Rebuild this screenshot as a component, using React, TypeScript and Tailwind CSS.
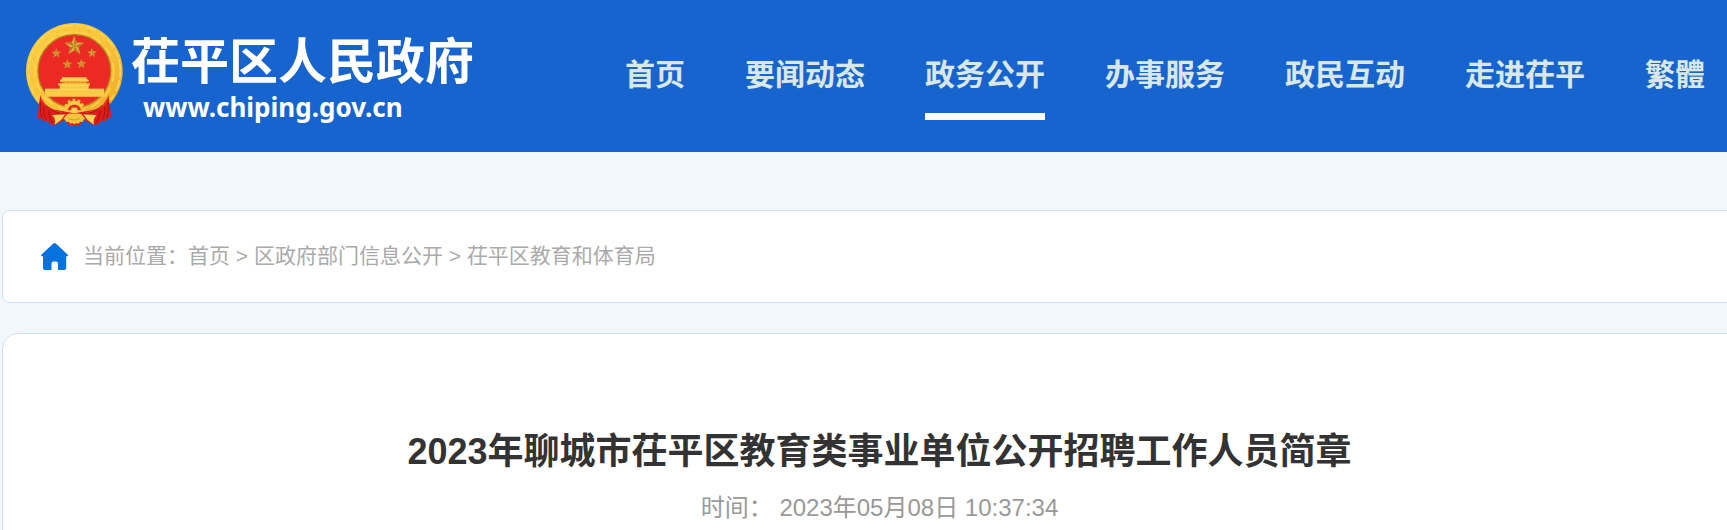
import React from 'react';

interface NavItem {
  label: string;
  active?: boolean;
}

const navItems: NavItem[] = [
  { label: '首页' },
  { label: '要闻动态' },
  { label: '政务公开', active: true },
  { label: '办事服务' },
  { label: '政民互动' },
  { label: '走进茌平' },
  { label: '繁體' },
];

const crumbs = ['首页', '区政府部门信息公开', '茌平区教育和体育局'];

// five pointed star, centred on cx / cy
const Star: React.FC<{ cx: number; cy: number; r: number }> = ({ cx, cy, r }) => {
  const tip = (i: number, radius: number) => {
    const a = (Math.PI / 5) * i - Math.PI / 2;
    return `${(cx + radius * Math.cos(a)).toFixed(1)},${(cy + radius * Math.sin(a)).toFixed(1)}`;
  };
  const points = Array.from({ length: 10 }, (_, i) => tip(i, i % 2 ? r * 0.42 : r));
  return (
    <g>
      <polygon points={points.join(' ')} fill="#e3ae42" />
      {[0, 2, 4, 6, 8].map((i) => (
        <polygon key={i} points={`${cx},${cy} ${tip(i, r)} ${tip(i + 1, r * 0.42)}`} fill="#b9781f" />
      ))}
    </g>
  );
};

const Emblem: React.FC = () => (
  <svg viewBox="18 22 291 309" className="w-[97px] h-[103px] shrink-0" aria-hidden="true">
    <defs>
      <linearGradient id="ring" x1="0" y1="0" x2="1" y2="1">
        <stop offset="0" stopColor="#fbd044" />
        <stop offset="0.5" stopColor="#f7c43a" />
        <stop offset="1" stopColor="#efa827" />
      </linearGradient>
    </defs>
    <circle cx="163" cy="167" r="145" fill="url(#ring)" />
    <circle cx="163" cy="167" r="138" fill="none" stroke="#fdd550" strokeWidth="5" strokeDasharray="19 7 35 12" />
    <circle cx="163" cy="167" r="127" fill="none" stroke="#efb431" strokeWidth="3" strokeDasharray="5 21 8 34" />
    <circle cx="163" cy="167" r="118" fill="none" stroke="#fdd550" strokeWidth="4" strokeDasharray="32 19" />
    <circle cx="163" cy="166" r="109" fill="#ec2a24" stroke="#b5791f" strokeWidth="4" />
    <Star cx={163} cy={91} r={31} />
    <Star cx={109} cy={113} r={15} />
    <Star cx={216} cy={112} r={15} />
    <Star cx={142} cy={146} r={15} />
    <Star cx={184} cy={145} r={15} />
    {/* gate tower */}
    <path d="M126 185h74v5l6 3v5h-86v-5l6-3z" fill="#fbd150" />
    <path d="M128 198h70v7h-70z" fill="#f0a52c" />
    <path d="M115 203h95v6h-4v10h46v24H75v-24h44v-10h-4z" fill="#fbcb45" />
    <path d="M130 201h66" stroke="#c9782a" strokeWidth="2" strokeDasharray="6 5" />
    <path d="M119 210h87M77 221h173" stroke="#ffe07a" strokeWidth="2" />
    {/* upper half of the cog wheel */}
    <circle cx="163" cy="280" r="25" fill="#f9c942" stroke="#f9c942" strokeWidth="12" strokeDasharray="8 6" />
    <path d="M143 284c3-22 37-22 40 0z" fill="#e02a20" />
    <path d="M154 276h18v14h-18z" fill="#fbd150" />
    {/* drapes */}
    <path
      d="M61 238C66 262 84 278 112 284C130 288 146 288 163 294C180 288 196 288 214 284C242 278 260 262 265 238L270 270L274 305L262 308L254 318L244 314L236 326L222 328L210 322L190 312L180 328L146 328L136 312L116 322L104 328L90 326L82 314L72 318L64 308L53 308L56 270Z"
      fill="#de1c1b"
    />
    <path d="M64 250C76 276 98 288 128 291M262 250C250 276 228 288 198 291" fill="none" stroke="#f23a2e" strokeWidth="4" />
    <path
      d="M62 260C60 278 61 292 66 306M72 274C70 290 73 302 80 314M86 284C86 298 90 310 98 322M264 260C266 278 265 292 260 306M254 274C256 290 253 302 246 314M240 284C240 298 236 310 228 322M80 270C94 284 110 292 134 296M246 270C232 284 216 292 192 296"
      fill="none"
      stroke="#ab1013"
      strokeWidth="3"
    />
    <path
      d="M96 298L136 296L124 312L104 327C107 314 104 305 96 298ZM230 298L190 296L202 312L222 327C219 314 222 305 230 298Z"
      fill="#f9d457"
    />
    {/* lower half of the cog wheel */}
    <path
      d="M135 304C140 293 152 291 163 296C174 291 186 293 191 304L196 309L190 313L188 319L180 318L176 324L169 322L163 326L157 322L150 324L146 318L138 319L136 313L130 309Z"
      fill="#f7c63f"
    />
    <path d="M144 306c10 9 28 9 38 0" fill="none" stroke="#dc9829" strokeWidth="3" />
  </svg>
);

const HomeIcon: React.FC = () => (
  <svg viewBox="0 0 27 27" className="size-[27px] shrink-0" aria-hidden="true">
    <path
      d="M12.4.6a1.8 1.8 0 0 1 2.4 0L26.6 11.6c.8.8.3 1.7-.7 1.7h-.7V25a2 2 0 0 1-2 2H17v-6.5a2 2 0 0 0-2-2h-2.5a2 2 0 0 0-2 2V27H4a2 2 0 0 1-2-2V13.3h-.8c-1 0-1.5-.9-.7-1.7z"
      fill="#0472df"
    />
  </svg>
);

const App: React.FC = () => {
  return (
    <div className="min-h-screen overflow-hidden bg-[#f2f7fc] font-['Liberation_Sans','Noto_Sans_CJK_SC',sans-serif]">
      <header className="flex h-[152px] justify-between bg-[#1864ce] pl-[26px] pr-[22px] whitespace-nowrap">
        <a href="#" className="flex items-start gap-2 pt-[23px] text-white">
          <Emblem />
          <div className="pt-2 font-bold">
            <div className="text-[49px] leading-[62px]">茌平区人民政府</div>
            <div className="pl-3 font-['Noto_Sans',sans-serif] text-[26px] leading-7">www.chiping.gov.cn</div>
          </div>
        </a>
        <nav className="flex items-start gap-[60px] pt-[50px]">
          {navItems.map((item) => (
            <a
              key={item.label}
              href="#"
              className={`border-b-[7px] pb-[13px] text-[30px] leading-[50px] font-bold text-[#d9e7e7] ${
                item.active ? 'border-white' : 'border-transparent'
              }`}
            >
              {item.label}
            </a>
          ))}
        </nav>
      </header>

      {/* the content column runs past the right edge of the window */}
      <main className="-mr-8 ml-0.5 pt-[58px]">
        <nav className="flex items-center gap-[15px] rounded-lg border border-[#cfe2f8] bg-white px-[38px] pt-[29px] pb-[30px] text-[21px] leading-8 text-[#aaaaaa]">
          <HomeIcon />
          <div>
            当前位置：
            {crumbs.map((crumb, i) => (
              <React.Fragment key={crumb}>
                {i > 0 && ' > '}
                <a href="#">{crumb}</a>
              </React.Fragment>
            ))}
          </div>
        </nav>

        <article className="mt-[30px] min-h-[300px] rounded-2xl border border-[#cfe2f8] bg-white pt-[91px] pr-0.5 text-center">
          <h1 className="text-4xl leading-[54px] font-bold text-[#333333]">
            2023年聊城市茌平区教育类事业单位公开招聘工作人员简章
          </h1>
          <p className="mt-[11px] text-2xl leading-9 text-[#999999]">时间： 2023年05月08日 10:37:34</p>
        </article>
      </main>
    </div>
  );
};

export default App;
